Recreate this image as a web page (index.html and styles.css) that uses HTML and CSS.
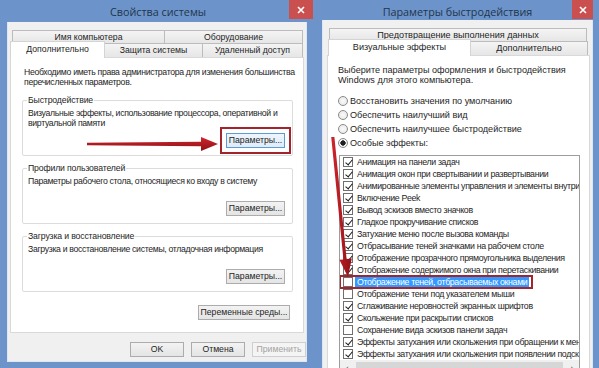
FILE: index.html
```html
<!DOCTYPE html>
<html>
<head>
<meta charset="utf-8">
<title>Свойства системы</title>
<link rel="stylesheet" href="styles.css">
</head>
<body>
<div class="desk">

  <!-- окно Свойства системы -->
  <div class="window win-left">
    <div class="caption">
      <span class="caption-text">Свойства системы</span>
      <span class="close"><svg width="8" height="8" viewBox="0 0 8 8"><path d="M1 1L7 7M7 1L1 7" stroke="#fff" stroke-width="1.6"/></svg></span>
    </div>
    <div class="client">
      <div class="tab-row back">
        <div class="tab w153">Имя компьютера</div>
        <div class="tab w138">Оборудование</div>
      </div>
      <div class="tab-row front">
        <div class="tab active w95">Дополнительно</div>
        <div class="tab w98">Защита системы</div>
        <div class="tab w100">Удаленный доступ</div>
      </div>
      <div class="panel panel-left">
        <p class="intro">Необходимо иметь права администратора для изменения большинства<br>перечисленных параметров.</p>

        <fieldset class="group">
          <legend>Быстродействие</legend>
          <p class="desc">Визуальные эффекты, использование процессора, оперативной и<br>виртуальной памяти</p>
          <div class="btn-line"><button class="btn btn-default marked">Параметры...</button></div>
        </fieldset>

        <fieldset class="group">
          <legend>Профили пользователей</legend>
          <p class="desc">Параметры рабочего стола, относящиеся ко входу в систему</p>
          <div class="btn-line"><button class="btn">Параметры...</button></div>
        </fieldset>

        <fieldset class="group">
          <legend>Загрузка и восстановление</legend>
          <p class="desc">Загрузка и восстановление системы, отладочная информация</p>
          <div class="btn-line"><button class="btn">Параметры...</button></div>
        </fieldset>

        <div class="btn-line env"><button class="btn btn-wide">Переменные среды...</button></div>
      </div>
      <div class="footer">
        <button class="btn btn-foot">OK</button>
        <button class="btn btn-foot">Отмена</button>
        <button class="btn btn-foot" disabled>Применить</button>
      </div>
    </div>
  </div>

  <!-- окно Параметры быстродействия -->
  <div class="window win-right">
    <div class="caption">
      <span class="caption-text">Параметры быстродействия</span>
      <span class="close close-small"><svg width="8" height="8" viewBox="0 0 8 8"><path d="M1 1L7 7M7 1L1 7" stroke="#fff" stroke-width="1.6"/></svg></span>
    </div>
    <div class="client">
      <div class="tab-row back back-right">
        <div class="tab w258">Предотвращение выполнения данных</div>
      </div>
      <div class="tab-row front front-right">
        <div class="tab active w143">Визуальные эффекты</div>
        <div class="tab w117">Дополнительно</div>
      </div>
      <div class="panel panel-right">
        <p class="intro">Выберите параметры оформления и быстродействия<br>Windows для этого компьютера.</p>

        <div class="radios">
          <label class="radio"><span class="dot"></span>Восстановить значения по умолчанию</label>
          <label class="radio"><span class="dot"></span>Обеспечить наилучший вид</label>
          <label class="radio"><span class="dot"></span>Обеспечить наилучшее быстродействие</label>
          <label class="radio"><span class="dot on"></span>Особые эффекты:</label>
        </div>

        <div class="listbox">
          <div class="item"><span class="cb on"></span>Анимация на панели задач</div>
          <div class="item"><span class="cb on"></span>Анимация окон при свертывании и развертывании</div>
          <div class="item"><span class="cb on"></span>Анимированные элементы управления и элементы внутри окна</div>
          <div class="item"><span class="cb on"></span>Включение Peek</div>
          <div class="item"><span class="cb on"></span>Вывод эскизов вместо значков</div>
          <div class="item"><span class="cb on"></span>Гладкое прокручивание списков</div>
          <div class="item"><span class="cb on"></span>Затухание меню после вызова команды</div>
          <div class="item"><span class="cb on"></span>Отбрасывание теней значками на рабочем столе</div>
          <div class="item"><span class="cb on"></span>Отображение прозрачного прямоугольника выделения</div>
          <div class="item"><span class="cb on"></span>Отображение содержимого окна при перетаскивании</div>
          <div class="item item-mark"><span class="cb"></span><span class="sel">Отображение теней, отбрасываемых окнами</span></div>
          <div class="item"><span class="cb"></span>Отображение тени под указателем мыши</div>
          <div class="item"><span class="cb on"></span>Сглаживание неровностей экранных шрифтов</div>
          <div class="item"><span class="cb on"></span>Скольжение при раскрытии списков</div>
          <div class="item"><span class="cb"></span>Сохранение вида эскизов панели задач</div>
          <div class="item"><span class="cb on"></span>Эффекты затухания или скольжения при обращении к меню</div>
          <div class="item"><span class="cb on"></span>Эффекты затухания или скольжения при появлении подсказок</div>
          <div class="hscroll"><span class="arr">‹</span><span class="thumb"></span><span class="arr">›</span></div>
        </div>
      </div>
    </div>
  </div>

  <!-- стрелки поверх окон -->
  <svg class="arrows" width="599" height="368" viewBox="0 0 599 368">
    <defs>
      <linearGradient id="redv" x1="0" y1="0" x2="0" y2="1">
        <stop offset="0" stop-color="#d0262c"/>
        <stop offset="1" stop-color="#8e1117"/>
      </linearGradient>
      <linearGradient id="redh" x1="0" y1="0" x2="1" y2="0">
        <stop offset="0" stop-color="#d0262c"/>
        <stop offset="1" stop-color="#8e1117"/>
      </linearGradient>
    </defs>
    <polygon fill="url(#redv)" points="87,142.8 201,141.8 201,137 218,144 201,151 201,146.2 87,145.2"/>
    <polygon fill="url(#redh)" points="331.2,137 334.4,137 346.6,259 351.8,258.4 348,277 339.4,259.8 343.4,259.4"/>
  </svg>
</div>
</body>
</html>
```

FILE: styles.css
```css
* {
    box-sizing: border-box;
}

body {
    margin: 0;
    background: #6c94ca;
    font-family: "Liberation Sans", Arial, sans-serif;
    font-size: 8.7px;
    color: #1e1e1e;
}

p {
    margin: 0;
}

.desk {
    position: relative;
    display: flex;
    width: 599px;
    height: 368px;
    overflow: hidden;
}

/* окна */
.window {
    display: flex;
    flex-direction: column;
}
.win-left {
    width: 316px;
    padding: 0 9px 6px 7px;
}
.win-right {
    width: 283px;
    padding: 0 6px 0 6px;
    font-size: 9.1px;
}

.caption {
    display: flex;
    align-items: flex-start;
    height: 22px;
    margin: 0 -9px 0 -7px;
    padding-left: 27px;
}
.win-right .caption {
    margin: 0 -6px;
    padding-left: 27px;
}
.caption-text {
    flex: 1;
    text-align: center;
    padding-top: 4px;
    font-family: "Open Sans", "Liberation Sans", sans-serif;
    font-size: 10.8px;
    line-height: 16px;
    color: #23354c;
}
.close {
    display: flex;
    align-items: center;
    justify-content: center;
    width: 24px;
    height: 19px;
    margin-right: 3px;
    background: #c9504f;
}
.close-small {
    width: 21px;
    margin-right: 6px;
}

.client {
    flex: 1;
    display: flex;
    flex-direction: column;
    background: #f0f0f0;
    border: 1px solid #dde6f2;
    border-top: none;
    padding: 8px 2px 0 2px;
}
.win-right .client {
    padding: 8px 2px 0 4px;
    border-bottom: none;
}

/* вкладки */
.tab-row {
    display: flex;
    height: 13px;
}
.tab-row.back {
    margin-left: 2px;
}
.tab-row.front {
    height: 14px;
}
.back-right {
    margin-left: 3px;
}
.front-right {
    margin-left: 1px;
}
.tab {
    flex: none;
    border: 1px solid #bcbcbc;
    border-bottom: none;
    background: linear-gradient(#f4f4f4, #e6e6e6);
    text-align: center;
    line-height: 12px;
    white-space: nowrap;
}
.tab + .tab {
    border-left: none;
}
.tab.active {
    position: relative;
    z-index: 1;
    height: 17px;
    margin-top: -2px;
    margin-bottom: -1px;
    padding-top: 1px;
    background: #fff;
    border-color: #d4d4d4;
}
.w153 { width: 153px; }
.w138 { width: 138px; }
.w95 { width: 95px; }
.w98 { width: 98px; }
.w100 { width: 100px; }
.w258 { width: 258px; }
.w143 { width: 143px; }
.w117 { width: 117px; }

.panel {
    background: #fff;
    border: 1px solid #d9d9d9;
    line-height: 10px;
}
.panel-left {
    height: 276px;
    padding: 9px 10px 0 11px;
}
.panel-left .intro {
    padding-left: 2px;
    margin-right: -10px;
    white-space: nowrap;
}
.panel-left p {
    letter-spacing: -0.32px;
}
.panel-right {
    flex: 1;
    padding: 9px 9px 0 10px;
}
.panel-right .intro {
    white-space: nowrap;
}

/* группы */
.group {
    margin: 0;
    margin-top: 8px;
    padding: 3px 7px 7px 5px;
    border: 1px solid #dcdcdc;
    border-radius: 2px;
}
.group + .group {
    margin-top: 7px;
}
.group legend {
    padding: 0 1px;
    margin-left: -1px;
    line-height: 10px;
    letter-spacing: -0.15px;
}
.desc {
    min-height: 20px;
    white-space: nowrap;
}
.btn-line {
    display: flex;
    justify-content: flex-end;
    margin-top: 5px;
}
.env {
    margin-top: 13px;
    margin-right: 3px;
}

/* кнопки */
.btn {
    width: 59px;
    height: 15px;
    padding: 0;
    font-family: inherit;
    font-size: 8.7px;
    line-height: 13px;
    color: #1e1e1e;
    border: 1px solid #acacac;
    border-radius: 0;
    background: linear-gradient(#f3f3f3, #e4e4e4);
}
.btn-default {
    border-color: #5b9bd8;
    background: linear-gradient(#eef5fc, #dfecf9);
}
.btn-wide {
    width: 92px;
}
.marked {
    outline: 2px solid #a3242a;
    outline-offset: 4px;
}
.footer {
    display: flex;
    justify-content: flex-end;
    gap: 7px;
    margin-top: 9px;
    margin-right: -2px;
}
.btn-foot {
    width: 54px;
}
.btn:disabled {
    color: #a3a3a3;
    border-color: #cfcfcf;
    background: #f4f4f4;
}

/* переключатели */
.radios {
    margin-top: 9px;
}
.radio {
    display: flex;
    align-items: center;
    gap: 2px;
    height: 14px;
}
.dot {
    width: 10px;
    height: 10px;
    border: 1px solid #8a8a8a;
    border-radius: 50%;
    background: radial-gradient(#fafafa, #e4e4e4);
}
.dot.on {
    background: radial-gradient(#1e1e1e 0 2.4px, #f2f2f2 2.9px);
}

/* список эффектов */
.listbox {
    margin-top: 5px;
    margin-left: 1px;
    width: 241px;
    height: 230px;
    border: 1px solid #9d9d9d;
    overflow: hidden;
    font-size: 8.8px;
    letter-spacing: -0.35px;
    line-height: 12px;
}
.item {
    display: flex;
    align-items: center;
    gap: 4px;
    height: 12px;
    padding-left: 3px;
    white-space: nowrap;
}
.item-mark {
    width: max-content;
    gap: 2px;
    padding-right: 3px;
    outline: 2px solid #a3242a;
    outline-offset: -1px;
}
.sel {
    padding: 0 2px;
    background: #3399ff;
    color: #fff;
}
.cb {
    flex: none;
    position: relative;
    width: 10px;
    height: 10px;
    border: 1px solid #6f6f6f;
    background: #fff;
}
.cb.on::after {
    content: "";
    position: absolute;
    left: 2.5px;
    top: 0;
    width: 3px;
    height: 6px;
    border: solid #1a1a1a;
    border-width: 0 1.6px 1.6px 0;
    transform: rotate(40deg);
}
.hscroll {
    display: flex;
    align-items: center;
    height: 16px;
    background: #f0f0f0;
    color: #555;
    font-size: 11px;
}
.arr {
    width: 14px;
    text-align: center;
}
.thumb {
    flex: 1;
    height: 12px;
    margin: 0 2px;
    background: #d6d6d6;
}

.arrows {
    position: absolute;
    left: 0;
    top: 0;
    pointer-events: none;
}
```
